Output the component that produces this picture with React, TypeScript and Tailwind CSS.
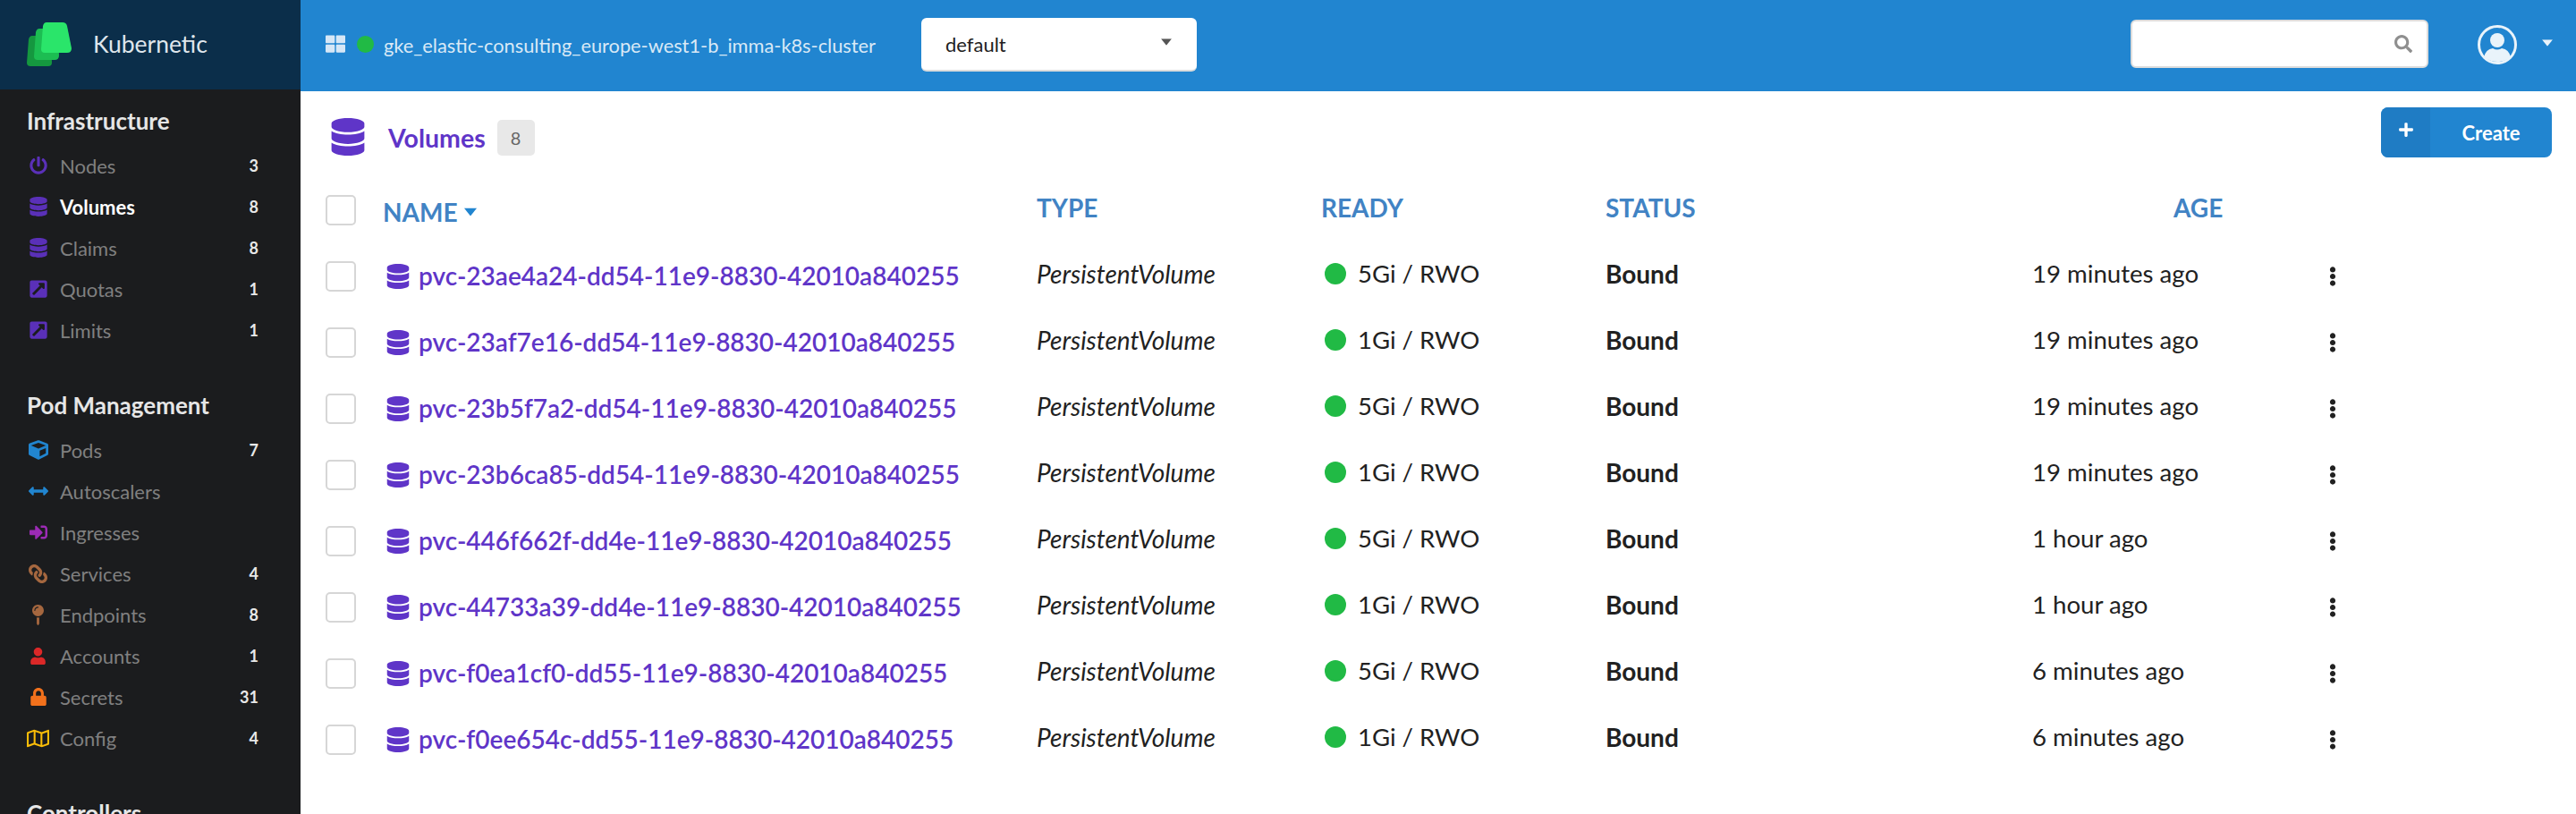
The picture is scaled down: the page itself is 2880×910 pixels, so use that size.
import { ReactNode } from "react";
import {
  FaArrowsAltH,
  FaCube,
  FaDatabase,
  FaEllipsisV,
  FaExternalLinkSquareAlt,
  FaLink,
  FaLock,
  FaMapPin,
  FaPlus,
  FaPowerOff,
  FaRegMap,
  FaSearch,
  FaSignInAlt,
  FaThLarge,
  FaUser,
} from "react-icons/fa";

type NavItem = {
  label: string;
  icon: ReactNode;
  count?: number;
  active?: boolean;
};

const purple = "text-[#5a30b8]";

const infrastructure: NavItem[] = [
  { label: "Nodes", icon: <FaPowerOff size={20} className={purple} />, count: 3 },
  { label: "Volumes", icon: <FaDatabase size={22} className={purple} />, count: 8, active: true },
  { label: "Claims", icon: <FaDatabase size={22} className={purple} />, count: 8 },
  { label: "Quotas", icon: <FaExternalLinkSquareAlt size={22} className={purple} />, count: 1 },
  { label: "Limits", icon: <FaExternalLinkSquareAlt size={22} className={purple} />, count: 1 },
];

const podManagement: NavItem[] = [
  { label: "Pods", icon: <FaCube size={22} className="text-[#2185d0]" />, count: 7 },
  { label: "Autoscalers", icon: <FaArrowsAltH size={22} className="text-[#2185d0]" /> },
  { label: "Ingresses", icon: <FaSignInAlt size={20} className="text-[#9c2bb5]" /> },
  { label: "Services", icon: <FaLink size={21} className="text-[#a5673f] -scale-x-100" />, count: 4 },
  { label: "Endpoints", icon: <FaMapPin size={23} className="text-[#a5673f]" />, count: 8 },
  { label: "Accounts", icon: <FaUser size={19} className="text-[#db2828]" />, count: 1 },
  { label: "Secrets", icon: <FaLock size={20} className="text-[#f2711c]" />, count: 31 },
  { label: "Config", icon: <FaRegMap size={25} className="text-[#fbbd08]" />, count: 4 },
];

const volumes = [
  { name: "pvc-23ae4a24-dd54-11e9-8830-42010a840255", size: "5Gi", age: "19 minutes ago" },
  { name: "pvc-23af7e16-dd54-11e9-8830-42010a840255", size: "1Gi", age: "19 minutes ago" },
  { name: "pvc-23b5f7a2-dd54-11e9-8830-42010a840255", size: "5Gi", age: "19 minutes ago" },
  { name: "pvc-23b6ca85-dd54-11e9-8830-42010a840255", size: "1Gi", age: "19 minutes ago" },
  { name: "pvc-446f662f-dd4e-11e9-8830-42010a840255", size: "5Gi", age: "1 hour ago" },
  { name: "pvc-44733a39-dd4e-11e9-8830-42010a840255", size: "1Gi", age: "1 hour ago" },
  { name: "pvc-f0ea1cf0-dd55-11e9-8830-42010a840255", size: "5Gi", age: "6 minutes ago" },
  { name: "pvc-f0ee654c-dd55-11e9-8830-42010a840255", size: "1Gi", age: "6 minutes ago" },
];

const gridCols = "grid grid-cols-[64px_731px_318px_318px_477px_318px_48px] items-center";

function Logo() {
  return (
    <svg width="52" height="52" viewBox="0 0 52 52">
      <path d="M6 16 H22 Q27 16 27 21 L28 46 Q28 50 24 50 H4 Q0 50 0 46 L2 20 Q3 16 6 16 Z" fill="#15973f" />
      <path d="M14 8 H30 Q35 8 35 13 L36 38 Q36 43 31 43 H12 Q8 43 8 39 L10 12 Q11 8 14 8 Z" fill="#1cbd52" />
      <path d="M22 1 H40 Q44 1 45 5 L50 30 Q50 35 45 35 H20 Q16 35 16 31 L18 5 Q19 1 22 1 Z" fill="#2ae56a" />
    </svg>
  );
}

function NavSection(props: { title: string; items: NavItem[] }) {
  return (
    <div className="mb-[38px]">
      <div className="h-[46px] mb-[4px] flex items-center pl-[30px] text-[26px] font-bold text-[#e6e6e6]">
        {props.title}
      </div>
      {props.items.map((item) => {
        return (
          <div key={item.label} className="h-[46px] flex items-center pl-[30px] pr-[47px]">
            <span className="w-[25px] flex justify-center shrink-0">{item.icon}</span>
            <span
              className={
                item.active
                  ? "ml-[12px] flex-1 text-[22px] font-bold text-white"
                  : "ml-[12px] flex-1 text-[22px] text-[#808080]"
              }
            >
              {item.label}
            </span>
            {item.count !== undefined && (
              <span className="text-[18px] font-bold text-[#e8e8e8]">{item.count}</span>
            )}
          </div>
        );
      })}
    </div>
  );
}

function Checkbox() {
  return <div className="w-[34px] h-[34px] rounded-[5px] border-[2px] border-[#d6d6d6] bg-white" />;
}

function Caret(props: { className: string }) {
  return (
    <svg width="16" height="10" viewBox="0 0 16 10" className={props.className}>
      <path d="M0 0 H16 L8 10 Z" fill="currentColor" />
    </svg>
  );
}

function Avatar() {
  return (
    <svg width="44" height="44" viewBox="0 0 44 44">
      <circle cx="22" cy="22" r="20.5" fill="#2185d0" stroke="#e9f3fa" strokeWidth="3" />
      <circle cx="22" cy="17" r="8" fill="#e9f3fa" />
      <path d="M7 36 Q9 27 17 26 Q22 29 27 26 Q35 27 37 36 Q30 41 22 41 Q14 41 7 36 Z" fill="#e9f3fa" />
    </svg>
  );
}

function TopBar() {
  return (
    <header className="h-[102px] bg-[#2185d0] flex items-center pl-[28px] pr-[24px] shrink-0">
      <FaThLarge size={22} className="text-[#d6e7f6] -mt-[4px]" />
      <span className="ml-[13px] w-[19px] h-[19px] rounded-full bg-[#21ba45] -mt-[4px]" />
      <span className="ml-[11px] text-[21.8px] text-[#d9e9f6]">gke_elastic-consulting_europe-west1-b_imma-k8s-cluster</span>
      <div className="ml-[51px] w-[308px] h-[60px] -mt-[2px] bg-white rounded-[6px] border-b-[2px] border-[#dcdcdc] flex items-center pl-[27px] pr-[26px] justify-between text-[22px] text-[#212121]">
        default
        <Caret className="text-[#555555] -mt-[4px] scale-75" />
      </div>
      <div className="ml-auto w-[333px] h-[54px] -mt-[4px] bg-white rounded-[6px] border-[2px] border-[#dcdcdc] flex items-center justify-end pr-[16px]">
        <FaSearch size={20} className="text-[#8f8f8f]" />
      </div>
      <div className="ml-[55px] -mt-[2px]">
        <Avatar />
      </div>
      <Caret className="ml-[26px] -mt-[6px] text-[#e9f3fa] scale-75" />
    </header>
  );
}

function VolumeTable() {
  return (
    <div className="pl-[28px]">
      <div className={gridCols + " h-[74px] text-[28px] font-bold text-[#4183c4]"}>
        <Checkbox />
        <div className="flex items-center pt-[4px]">
          NAME
          <Caret className="ml-[6px] text-[#2185d0] scale-90" />
        </div>
        <div className="pb-[6px]">TYPE</div>
        <div className="pb-[6px]">READY</div>
        <div className="pb-[6px]">STATUS</div>
        <div className="pb-[6px] pl-[158px]">AGE</div>
      </div>
      {volumes.map((volume) => {
        return (
          <div key={volume.name} className={gridCols + " h-[74px] text-[28px] text-[#212121]"}>
            <Checkbox />
            <div className="flex items-center pl-[3px] text-[#5f35c8] font-semibold">
              <FaDatabase size={28} className="mr-[9px]" />
              <span className="pb-[2px]">{volume.name}</span>
            </div>
            <div className="italic pb-[7px]">PersistentVolume</div>
            <div className="flex items-center pb-[7px] pl-[4px] text-[27.5px]">
              <span className="w-[24px] h-[24px] rounded-full bg-[#21ba45] mr-[13px]" />
              {volume.size} / RWO
            </div>
            <div className="font-bold pb-[7px]">Bound</div>
            <div className="pb-[7px] text-[27.6px]">{volume.age}</div>
            <div className="flex justify-end pr-[19px]">
              <FaEllipsisV size={22} className="text-[#212121]" />
            </div>
          </div>
        );
      })}
    </div>
  );
}

export default function App() {
  return (
    <div className="h-[910px] w-[2880px] flex overflow-hidden bg-white font-['Lato',sans-serif]">
      <aside className="w-[336px] shrink-0 bg-[#1b1c1e] h-full overflow-hidden">
        <div className="h-[100px] bg-[#0b2e4a] flex items-center pl-[30px]">
          <Logo />
          <span className="ml-[22px] text-[26.5px] text-[#dfe6ec]">Kubernetic</span>
        </div>
        <nav className="pt-[12px]">
          <NavSection title="Infrastructure" items={infrastructure} />
          <NavSection title="Pod Management" items={podManagement} />
          <NavSection title="Controllers" items={[]} />
        </nav>
      </aside>
      <main className="flex-1 flex flex-col min-w-0">
        <TopBar />
        <div className="pt-[18px] pr-[27px] pl-[35px] flex items-start justify-between h-[78px] box-content">
          <div className="flex items-center h-[56px] -ml-[3px] mt-[6px]">
            <FaDatabase size={42} className="text-[#5f35c8] -mt-[3px]" />
            <span className="ml-[24px] text-[28.5px] font-bold text-[#5f35c8]">Volumes</span>
            <span className="ml-[13px] w-[42px] h-[40px] rounded-[5px] bg-[#e8e8e8] text-[#666666] text-[20px] flex items-center justify-center">
              8
            </span>
          </div>
          <div className="w-[191px] h-[56px] bg-[#2185d0] rounded-[8px] flex overflow-hidden text-white text-[22px] font-bold">
            <span className="w-[55px] bg-[#1f7cc4] flex items-center justify-center pb-[6px]">
              <FaPlus size={18} />
            </span>
            <span className="flex-1 flex items-center justify-center">Create</span>
          </div>
        </div>
        <VolumeTable />
      </main>
    </div>
  );
}
